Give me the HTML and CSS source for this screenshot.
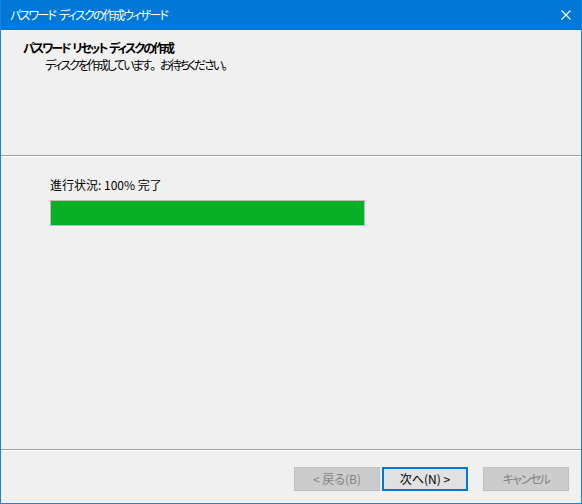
FILE: index.html
```html
<!DOCTYPE html>
<html lang="ja">
<head>
<meta charset="utf-8">
<link rel="stylesheet" href="styles.css">
</head>
<body>
<div class="window">
  <div class="titlebar">
    <span class="title">パスワード ディスクの作成ウィザード</span>
    <svg class="close" width="10" height="10" viewBox="0 0 10 10"><path d="M0.5 0.5 L9.5 9.5 M9.5 0.5 L0.5 9.5" stroke="#fff" stroke-width="1.1" fill="none"/></svg>
  </div>
  <div class="header">
    <div class="h-title">パスワード リセット ディスクの作成</div>
    <div class="h-sub">ディスクを作成しています<span class="full">。</span>お待ちください。</div>
  </div>
  <div class="sep"></div>
  <div class="content">
    <div class="label">進行状況: 100% 完了</div>
    <div class="progress"><div class="fill" style="width:100%"></div></div>
  </div>
  <div class="sep"></div>
  <div class="footer">
    <button class="btn disabled">&lt; 戻る(B)</button>
    <button class="btn default">次へ(N) &gt;</button>
    <button class="btn disabled cancel"><span class="tight">キャンセル</span></button>
  </div>
</div>
</body>
</html>
```
FILE: styles.css
```css
html, body {
  margin: 0;
  padding: 0;
  background: #f0f0f0;
}
body {
  font-family: "Noto Sans CJK JP", "Noto Sans", sans-serif;
  font-size: 12px;
  color: #000;
  font-feature-settings: "palt";
}
.tight {
  letter-spacing: -1.5px;
}
.full {
  font-feature-settings: normal;
}
.window {
  width: 582px;
  height: 504px;
  box-sizing: border-box;
  border: 1px solid #1883d7;
  border-top: none;
  display: flex;
  flex-direction: column;
  background: #f0f0f0;
}
.titlebar {
  height: 30px;
  background: #0078d7;
  display: flex;
  align-items: center;
  justify-content: space-between;
  padding: 0 10px 0 9px;
  flex: none;
}
.title {
  color: #fff;
  font-size: 12px;
  line-height: 16px;
  letter-spacing: -1.8px;
  word-spacing: 3px;
}
.close {
  display: block;
}
.header {
  height: 125px;
  box-sizing: border-box;
  padding: 9px 0 0 22px;
  flex: none;
}
.h-title {
  font-weight: bold;
  line-height: 17px;
  letter-spacing: -2px;
  word-spacing: 2px;
}
.h-sub {
  line-height: 17px;
  padding-left: 22px;
  letter-spacing: -2.1px;
}
.sep {
  height: 1px;
  background: #a0a0a0;
  border-bottom: 1px solid #ffffff;
  flex: none;
}
.content {
  flex: 1;
  padding: 19px 0 0 49px;
}
.label {
  line-height: 17px;
}
.progress {
  margin-top: 7px;
  width: 315px;
  height: 26px;
  box-sizing: border-box;
  border: 1px solid #bcbcbc;
  background: #e6e6e6;
}
.fill {
  height: 100%;
  background: #06b025;
}
.footer {
  height: 52px;
  box-sizing: border-box;
  display: flex;
  justify-content: flex-end;
  align-items: flex-start;
  padding: 16px 12px 0 0;
  gap: 2px;
  flex: none;
}
.btn {
  width: 86px;
  height: 24px;
  box-sizing: border-box;
  font-family: inherit;
  font-feature-settings: "palt";
  font-size: 12px;
  line-height: 16px;
  padding: 0;
  margin: 0;
}
.btn.disabled {
  background: #cccccc;
  border: 1px solid #bfbfbf;
  color: #838383;
}
.btn.default {
  background: #e1e1e1;
  border: 2px solid #0078d7;
  color: #000;
}
.btn.cancel {
  margin-left: 13px;
}
```
